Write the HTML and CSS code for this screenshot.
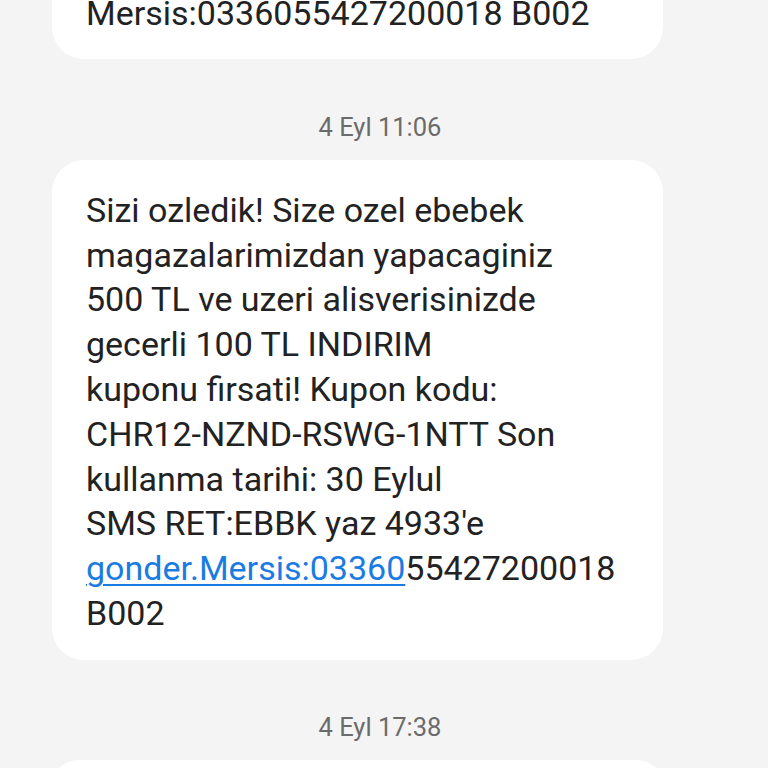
FILE: index.html
```html
<!DOCTYPE html>
<html>
<head>
<meta charset="utf-8">
<link rel="stylesheet" href="styles.css">
</head>
<body>
<div class="thread">
  <div class="bubble first">Mersis:0336055427200018 B002</div>
  <div class="stamp first-stamp">4 Eyl 11:06</div>
  <div class="bubble">Sizi ozledik! Size ozel ebebek<br>magazalarimizdan yapacaginiz<br>500 TL ve uzeri alisverisinizde<br>gecerli 100 TL INDIRIM<br>kuponu firsati! Kupon kodu:<br>CHR12-NZND-RSWG-1NTT Son<br>kullanma tarihi: 30 Eylul<br>SMS RET:EBBK yaz 4933'e<br><a class="link" href="#">gonder.Mersis:03360</a>55427200018<br>B002</div>
  <div class="stamp">4 Eyl 17:38</div>
  <div class="bubble last">&nbsp;</div>
</div>
</body>
</html>
```
FILE: styles.css
```css
html, body {
  margin: 0;
  padding: 0;
  background: #f4f4f4;
  width: 768px;
  height: 768px;
  overflow: hidden;
}
.thread {
  display: flex;
  flex-direction: column;
  font-family: Roboto, "Noto Sans", sans-serif;
}
.bubble {
  margin-left: 52px;
  width: 611px;
  box-sizing: border-box;
  background: #ffffff;
  border-radius: 32px;
  padding: 28px 10px 24px 34px;
  font-size: 34px;
  line-height: 44.8px;
  color: #222222;
  white-space: nowrap;
}
.bubble.first {
  margin-top: -37px;
  padding-bottom: 23px;
}
.stamp {
  margin-top: 52px;
  margin-bottom: 18px;
  text-align: center;
  padding-right: 8px;
  font-size: 25.5px;
  line-height: 30px;
  color: #6b6b6b;
}
.first-stamp {
  margin-top: 53px;
}
.link {
  color: #1a7ce2;
  text-decoration: underline;
  text-decoration-thickness: 2px;
  text-underline-offset: 4px;
}
.bubble.last {
  height: 40px;
}
```
